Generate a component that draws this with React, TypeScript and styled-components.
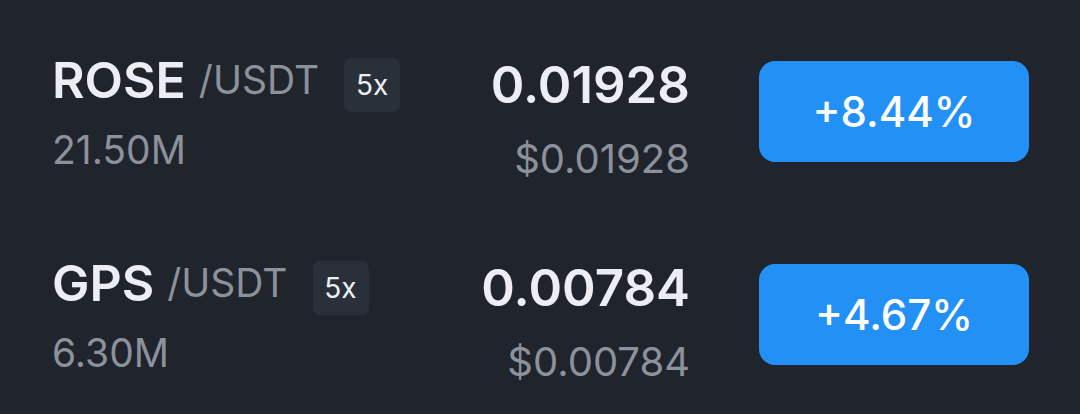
import React from "react";
import styled, { createGlobalStyle } from "styled-components";

const GlobalStyle = createGlobalStyle`
  html, body {
    margin: 0;
    padding: 0;
    background: #1f242d;
  }
  body {
    font-family: Inter, "Liberation Sans", sans-serif;
    -webkit-font-smoothing: antialiased;
  }
`;

const List = styled.div`
  width: 1080px;
  height: 414px;
  box-sizing: border-box;
  padding: 10px 51px 0 52px;
  background: #1f242d;
`;

const Row = styled.div`
  display: flex;
  align-items: center;
  height: 203px;
`;

const PairInfo = styled.div`
  flex: 1;
  display: flex;
  flex-direction: column;
  gap: 20px;
`;

const NameLine = styled.div`
  display: flex;
  align-items: center;
  height: 56px;
`;

const Base = styled.span`
  font-size: 50px;
  line-height: 56px;
  font-weight: 600;
  color: #eceef3;
`;

const Quote = styled.span`
  font-size: 39px;
  line-height: 56px;
  color: #8c919b;
  margin-left: 13px;
`;

const Leverage = styled.span`
  display: flex;
  align-items: center;
  justify-content: center;
  width: 56px;
  height: 54px;
  margin-left: 25px;
  margin-top: 10px;
  border-radius: 7px;
  background: #2a303a;
  color: #eceef3;
  font-size: 28px;
`;

const Volume = styled.div`
  font-size: 39px;
  line-height: 44px;
  color: #8c919b;
`;

const PriceCol = styled.div`
  display: flex;
  flex-direction: column;
  align-items: flex-end;
  gap: 24px;
  margin-top: 14px;
  margin-right: -2px;
`;

const Price = styled.div`
  font-size: 51px;
  line-height: 56px;
  font-weight: 600;
  color: #eceef3;
`;

const Fiat = styled.div`
  font-size: 40px;
  line-height: 44px;
  color: #8c919b;
`;

const Change = styled.button<{ $up: boolean }>`
  width: 270px;
  height: 101px;
  margin-left: 71px;
  border: none;
  border-radius: 16px;
  background: ${(p) => (p.$up ? "#2390f5" : "#e8505b")};
  color: #ffffff;
  font-family: inherit;
  font-size: 42px;
  font-weight: 500;
`;

const rows = [
  { base: "ROSE", volume: "21.50M", price: "0.01928", fiat: "$0.01928", change: "+8.44%" },
  { base: "GPS", volume: "6.30M", price: "0.00784", fiat: "$0.00784", change: "+4.67%" },
];

export default function App() {
  return (
    <List>
      <GlobalStyle />
      {rows.map((r) => (
        <Row key={r.base}>
          <PairInfo>
            <NameLine>
              <Base>{r.base}</Base>
              <Quote>/USDT</Quote>
              <Leverage>5x</Leverage>
            </NameLine>
            <Volume>{r.volume}</Volume>
          </PairInfo>
          <PriceCol>
            <Price>{r.price}</Price>
            <Fiat>{r.fiat}</Fiat>
          </PriceCol>
          <Change $up={r.change.startsWith("+")}>{r.change}</Change>
        </Row>
      ))}
    </List>
  );
}
